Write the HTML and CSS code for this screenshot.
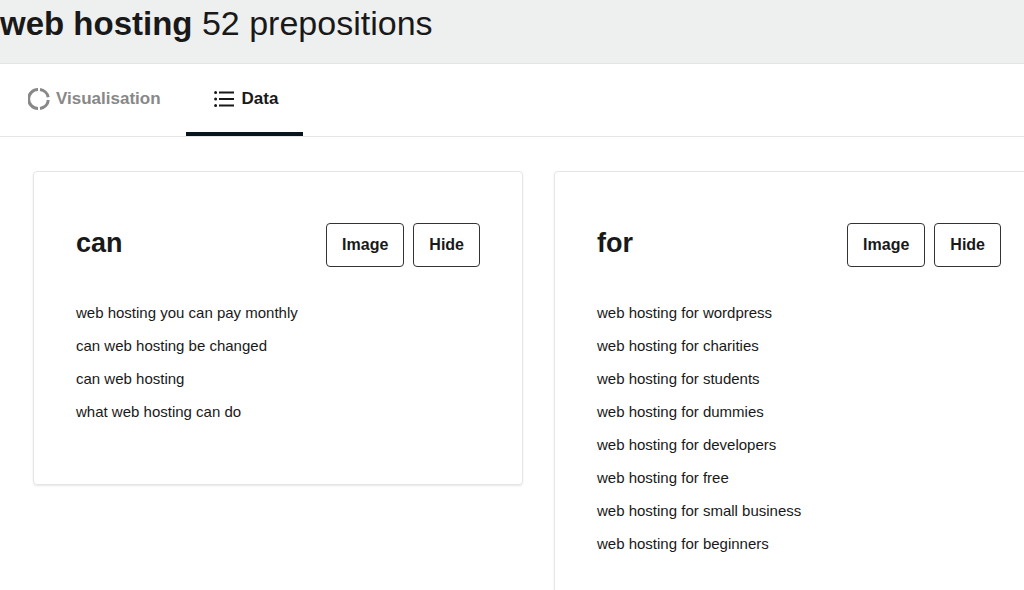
FILE: index.html
```html
<!DOCTYPE html>
<html lang="en">
<head>
  <meta charset="UTF-8" />
  <meta name="viewport" content="width=device-width, initial-scale=1.0"/>
  <title>web hosting - 52 prepositions</title>
  <link rel="stylesheet" href="styles.css">
</head>
<body>

<header class="page-header">
  <h1 class="page-title"><strong>web hosting</strong> 52 prepositions</h1>
</header>

<nav class="tabs">
  <a class="tab" href="#visualisation">
    <svg class="tab-icon" viewBox="0 0 22 22" fill="none" stroke="currentColor" stroke-width="3" aria-hidden="true">
      <path d="M12 1.6A9.4 9.4 0 0 1 20.2 9.2" />
      <path d="M20.3 12A9.4 9.4 0 0 1 12 20.4" />
      <path d="M10 20.4A9.4 9.4 0 0 1 10 1.6" />
    </svg>
    Visualisation
  </a>
  <a class="tab active" href="#data" aria-current="page">
    <svg class="tab-icon" viewBox="0 0 22 22" fill="none" stroke="currentColor" stroke-width="2" aria-hidden="true">
      <path d="M5 4.5H20M5 11H20M5 17.5H20" />
      <path d="M1.6 4.5h.01M1.6 11h.01M1.6 17.5h.01" stroke-width="3" stroke-linecap="round" />
    </svg>
    Data
  </a>
</nav>

<main class="cards" id="data">
  <section class="card">
    <div class="card-header">
      <h2 class="card-title">can</h2>
      <div class="card-actions">
        <button type="button" class="btn">Image</button>
        <button type="button" class="btn">Hide</button>
      </div>
    </div>
    <ul class="suggestions">
      <li>web hosting you can pay monthly</li>
      <li>can web hosting be changed</li>
      <li>can web hosting</li>
      <li>what web hosting can do</li>
    </ul>
  </section>

  <section class="card">
    <div class="card-header">
      <h2 class="card-title">for</h2>
      <div class="card-actions">
        <button type="button" class="btn">Image</button>
        <button type="button" class="btn">Hide</button>
      </div>
    </div>
    <ul class="suggestions">
      <li>web hosting for wordpress</li>
      <li>web hosting for charities</li>
      <li>web hosting for students</li>
      <li>web hosting for dummies</li>
      <li>web hosting for developers</li>
      <li>web hosting for free</li>
      <li>web hosting for small business</li>
      <li>web hosting for beginners</li>
    </ul>
  </section>
</main>

</body>
</html>
```

FILE: styles.css
```css
* {
  box-sizing: border-box;
}

html {
  overflow: hidden;
}

body {
  font-family: "Liberation Sans", Arial, sans-serif;
  margin: 0;
  background-color: #fff;
  color: #191919;
}

.page-header {
  padding: 4px 0 20px;
  background-color: #eef0ef;
  border-bottom: 1px solid #e3e5e4;
}

.page-title {
  margin: 0;
  font-size: 34px;
  line-height: 39px;
  font-weight: 400;
}

.page-title strong {
  font-size: 33px;
  font-weight: 700;
}

.tabs {
  display: flex;
  border-bottom: 1px solid #e5e5e5;
}

.tab {
  display: flex;
  align-items: center;
  gap: 6px;
  padding: 2px 25px 0 28px;
  height: 72px;
  border-bottom: 4px solid transparent;
  color: #888;
  font-size: 17px;
  font-weight: 700;
  text-decoration: none;
}

.tab.active {
  color: #191919;
  border-bottom-color: #07151f;
}

.tab-icon {
  width: 22px;
  height: 22px;
}

/* the row runs past the right edge of the window */
.cards {
  display: grid;
  grid-template-columns: 1fr 1fr;
  align-items: start;
  gap: 31px;
  margin: 34px -20px 34px 33px;
}

.card {
  padding: 51px 42px 56px;
  border: 1px solid #e5e5e5;
  border-radius: 4px;
  box-shadow: 0 1px 2px rgba(0, 0, 0, 0.1);
}

.card-header {
  display: flex;
  justify-content: space-between;
  align-items: flex-start;
  margin-bottom: 29px;
}

.card-title {
  margin: 0;
  font-size: 27px;
  line-height: 40px;
}

.card-actions {
  display: flex;
  gap: 9px;
}

.btn {
  height: 44px;
  padding: 0 15px;
  background-color: #fff;
  border: 1px solid #333;
  border-radius: 4px;
  color: #191919;
  font-family: inherit;
  font-size: 16px;
  font-weight: 700;
  cursor: pointer;
}

.suggestions {
  list-style: none;
  margin: 0;
  padding: 0;
  font-size: 15px;
  line-height: 33px;
}
```
